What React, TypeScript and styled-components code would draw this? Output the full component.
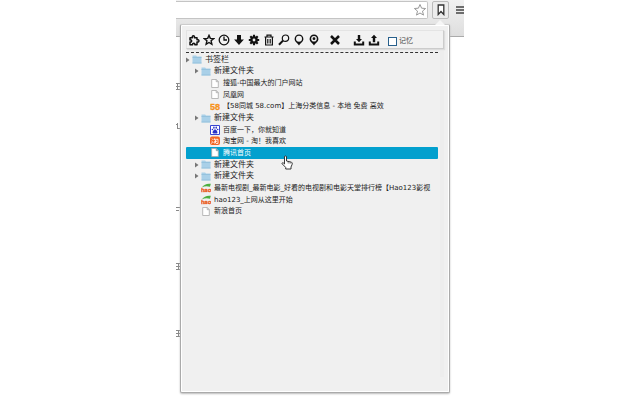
import React from "react";
import styled, { createGlobalStyle } from "styled-components";

const GlobalStyle = createGlobalStyle`
  * { box-sizing: border-box; }
  body {
    margin: 0;
    background: #fff;
    color: #222;
    font: 7px/10px "DejaVu Sans", "Noto Sans CJK SC", sans-serif;
  }
  button, a { color: inherit; font: inherit; }
`;

const Page = styled.main`
  position: relative;
  width: 45%;
  min-height: 100vh;
  margin: 0 auto;
`;

const BrowserBar = styled.header`
  display: flex;
  align-items: flex-start;
  gap: 4px;
  height: 37px;
  overflow: hidden;
  background: linear-gradient(#f1f1f1, #dedede);
  border-bottom: 1px solid #aaa;
`;

const AddressBar = styled.div`
  display: flex;
  flex: 1;
  align-items: center;
  height: 18px;
  margin-top: 1px;
  background: #fff;
  border: 1px solid #c4c4c4;
  border-left: 0;
  border-radius: 0 2px 2px 0;
`;

const AddressInput = styled.input`
  flex: 1;
  min-width: 0;
  padding: 0;
  border: 0;
  background: transparent;
  outline: none;
`;

const PlainButton = styled.button`
  display: flex;
  align-items: center;
  justify-content: center;
  padding: 0;
  border: 0;
  background: none;
  cursor: pointer;
`;

const ExtensionButton = styled(PlainButton)`
  width: 17px;
  height: 18px;
  margin-top: 1px;
  border: 1px solid #bbb;
  border-radius: 2px;
  background: #ececec;
`;

const MenuButton = styled(PlainButton)`
  justify-content: flex-end;
  width: 11px;
  height: 20px;
`;

const EdgeMarks = styled.svg`
  display: block;
`;

const Popup = styled.section`
  position: absolute;
  inset: 24px 14px 7px 4px;
  padding: 5px 5px 15px;
  background: #f0f0f0;
  border: 1px solid #aaa;
  border-top-color: #ccc;
  border-radius: 2px;
  box-shadow: inset 0 0 0 1px #fff, 0 1px 2px #bbb;
  &::before {
    content: "";
    position: absolute;
    top: -5px;
    right: 4px;
    border: 5px solid transparent;
    border-top: 0;
    border-bottom-color: #f6f6f6;
  }
`;

const PopupBody = styled.div`
  height: 100%;
  padding-right: 6px;
  background: linear-gradient(#ededed, #ededed) right / 4px 100% no-repeat;
`;

const Toolbar = styled.div`
  display: flex;
  align-items: center;
  height: 19px;
  margin-right: -6px;
  padding-left: 1px;
  background: #f2f2f2;
  border: 1px solid #e4e4e4;
  border-right-color: #ccc;
  border-bottom-color: #ccc;
  box-shadow: 1px 1px 1px #ddd;
`;

const Tools = styled.div<{ $gap: number }>`
  display: flex;
  flex: none;
  gap: 3px;
  margin-right: ${(p) => p.$gap}px;
`;

const Tool = styled(PlainButton)`
  width: 12px;
  height: 16px;
  color: #111;
`;

const Remember = styled.label`
  display: flex;
  align-items: center;
  gap: 2px;
  padding-top: 3px;
  color: #444;
  white-space: nowrap;
`;

const Check = styled.input`
  appearance: none;
  width: 9px;
  height: 9px;
  margin: 0;
  background: #fff;
  border: 1px solid #28608c;
  &:checked { background: #28608c; }
`;

const Tree = styled.ul`
  display: grid;
  grid-template-rows: repeat(14, 1fr);
  height: 163px;
  margin: 1px 0 0;
  padding: 0;
  list-style: none;
`;

const Divider = styled.hr`
  height: 0;
  margin: 3px 0 0;
  border: 0;
  border-top: 1px dashed #333;
`;

const Row = styled.li<{ $depth: number; $active?: boolean }>`
  display: flex;
  align-items: center;
  min-width: 0;
  padding-left: ${(p) => p.$depth * 9}px;
  overflow: hidden;
  border-radius: 1px;
  color: ${(p) => (p.$active ? "#fff" : "#222")};
  background: ${(p) => (p.$active ? "#02a0ce" : "transparent")};
`;

const Arrow = styled.span`
  display: flex;
  flex: none;
  width: 6px;
`;

const Entry = styled.a`
  display: flex;
  flex: 1;
  align-items: center;
  gap: 3px;
  min-width: 0;
  text-decoration: none;
  white-space: nowrap;
`;

const FolderEntry = styled(PlainButton)`
  gap: 3px;
  font-size: 8px;
  white-space: nowrap;
`;

const IconBox = styled.span`
  display: flex;
  flex: none;
  justify-content: center;
  width: 10px;
`;

const Pointer = styled.svg`
  position: absolute;
  top: 130px;
  left: 100px;
  pointer-events: none;
`;

const icons: Record<string, React.ReactNode> = {
  扩展: <path d="M2 3.7h2.4C3.4 1.2 7.2 1.2 6.4 3.7H9v2.1c2.6-1 2.6 3 0 2.1v2.8H6.8c.5-2-2.6-2-2.1 0H2V8c2.2.6 2.2-2.6 0-2.1z" fill="none" stroke="currentColor" strokeWidth="1.5" strokeLinejoin="round" />,
  收藏: <path d="M6 1.4l1.3 3 3.4.2-2.6 2.2.8 3.5L6 8.5l-2.9 1.8.8-3.5L1.3 4.6l3.4-.2z" fill="none" stroke="currentColor" strokeWidth="1.4" />,
  历史: <g fill="none" stroke="currentColor" strokeWidth="1.3"><circle cx="6" cy="6" r="4.8" /><path d="M6 2.5V6h3" /></g>,
  下载: <path d="M4 1h4v4.4h2.9L6 11 1.1 5.4H4z" fill="currentColor" />,
  设置: <g><path d="M6 .8v10.4M.8 6h10.4M2.3 2.3l7.4 7.4M9.7 2.3L2.3 9.7" stroke="currentColor" strokeWidth="2.1" /><circle cx="6" cy="6" r="3.8" fill="currentColor" /><circle cx="6" cy="6" r="1.4" fill="#eee" /></g>,
  删除: <g fill="none" stroke="currentColor" strokeWidth="1.2"><path d="M1.5 3h9M4 3V1.2h4V3M2.6 3v8h6.8V3M4.8 5v4.5M7.2 5v4.5" /></g>,
  搜索: <g fill="none" stroke="currentColor"><circle cx="7.5" cy="4.2" r="3.2" strokeWidth="1.2" /><path d="M5 6.6L1 10.8" strokeWidth="2" /></g>,
  位置: <g><path d="M6 11.5C5 9 1.6 7.8 1.6 4.9a4.4 4.4 0 018.8 0C10.4 7.8 7 9 6 11.5z" fill="currentColor" /><circle cx="6" cy="4.7" r="3" fill="#f2f2f2" /></g>,
  定位: <g><path d="M6 11.5C5 9 1.6 7.8 1.6 4.9a4.4 4.4 0 018.8 0C10.4 7.8 7 9 6 11.5z" fill="currentColor" /><circle cx="6" cy="4.7" r="2.8" fill="#f2f2f2" /><circle cx="6" cy="4.7" r="1.4" fill="currentColor" /></g>,
  关闭: <path d="M2 2l8 8M10 2l-8 8" stroke="currentColor" strokeWidth="2.5" />,
  导入: <path d="M4.8 1h2.4v4H9L6 8.2 3 5h1.8zM.8 7.5h2v2h6.4v-2h2v4H.8z" fill="currentColor" />,
  导出: <path d="M6 .8L9 4H7.2v4.2H4.8V4H3zM.8 7.5h2v2h6.4v-2h2v4H.8z" fill="currentColor" />,
};

type Kind = "folder" | "page" | "58" | "baidu" | "taobao" | "hao";

const KindIcon = ({ kind }: { kind: Kind }) => {
  switch (kind) {
    case "folder":
      return <svg width="10" height="9" viewBox="0 0 10 9"><path d="M.5.5h3.7l.8 1h4.5v7h-9z" fill="#a9d0e8" /><path d="M.5 8h9M.5 2.5h9" stroke="#8dbbd8" strokeWidth=".7" /></svg>;
    case "page":
      return <svg width="8" height="9" viewBox="0 0 8 9"><path d="M.7.5h4.6l2 2v6H.7zM5.2.5v2.2h2.1" fill="#fff" stroke="#aaa" strokeWidth=".8" /></svg>;
    case "58":
      return <svg width="10" height="11" viewBox="0 0 10 11"><text x="5" y="9" textAnchor="middle" fill="#f7931e" stroke="#f7931e" strokeWidth=".3" fontSize="9" fontWeight="700" fontFamily="Liberation Sans, sans-serif">58</text></svg>;
    case "baidu":
      return <svg width="10" height="10" viewBox="0 0 10 10"><path d="M.5.5h9v9h-9z" fill="#fff" stroke="#3845d3" /><g fill="#2932c8"><ellipse cx="3.9" cy="2.7" rx=".8" ry="1.1" /><ellipse cx="6.2" cy="2.7" rx=".8" ry="1.1" /><circle cx="2.4" cy="4.5" r=".8" /><circle cx="7.7" cy="4.5" r=".8" /><path d="M5 4.2C4 4.5 2.2 6.6 2.5 7.7s4.7 1.2 5 0S6 4.3 5 4.2z" /></g></svg>;
    case "taobao":
      return <svg width="10" height="10" viewBox="0 0 10 10"><rect y=".5" width="10" height="8.5" rx="2" fill="#f26522" /><path d="M1.8 2.7l1 .8M1.5 5l1 .7-1 2M4.5 2.5L4 4M4 3.3h4v4.2H6M4 5.3h3M5.5 4v3H4V6" stroke="#fff" strokeWidth=".8" fill="none" /></svg>;
    case "hao":
      return <svg width="10" height="10" viewBox="0 0 10 10"><path d="M1 4.2Q4 0 9.8.8L9 3.8Q5 2.4 1 4.2z" fill="#4caf3f" /><text x="5" y="9" textAnchor="middle" fill="#ea5a1a" stroke="#ea5a1a" strokeWidth=".3" fontSize="6" fontWeight="700" fontStyle="italic" fontFamily="Liberation Sans, sans-serif">hao</text></svg>;
  }
};

const rows: { depth: number; kind: Kind; text: string; active?: boolean }[] = [
  { depth: 0, kind: "folder", text: "书签栏" },
  { depth: 1, kind: "folder", text: "新建文件夹" },
  { depth: 2, kind: "page", text: "搜狐-中国最大的门户网站" },
  { depth: 2, kind: "page", text: "凤凰网" },
  { depth: 2, kind: "58", text: "【58同城 58.com】上海分类信息 - 本地 免费 高效" },
  { depth: 1, kind: "folder", text: "新建文件夹" },
  { depth: 2, kind: "baidu", text: "百度一下，你就知道" },
  { depth: 2, kind: "taobao", text: "淘宝网 - 淘！我喜欢" },
  { depth: 2, kind: "page", text: "腾讯首页", active: true },
  { depth: 1, kind: "folder", text: "新建文件夹" },
  { depth: 1, kind: "folder", text: "新建文件夹" },
  { depth: 1, kind: "hao", text: "最新电视剧_最新电影_好看的电视剧和电影天堂排行榜【Hao123影视" },
  { depth: 1, kind: "hao", text: "hao123_上网从这里开始" },
  { depth: 1, kind: "page", text: "新浪首页" },
];

const ToolGroup = ({ names, gap }: { names: string[]; gap: number }) => (
  <Tools $gap={gap}>
    {names.map((name) => (
      <Tool key={name} type="button" aria-label={name}>
        <svg width="12" height="12" viewBox="0 0 12 12">{icons[name]}</svg>
      </Tool>
    ))}
  </Tools>
);

export default function App() {
  return (
    <>
      <GlobalStyle />
      <Page lang="zh-CN">
        <BrowserBar>
          <AddressBar>
            <AddressInput aria-label="地址" />
            <PlainButton type="button" aria-label="添加书签">
              <svg width="14" height="14" viewBox="0 0 14 14"><path d="M7 1.5l1.6 3.7 4 .3-3.1 2.6 1 4L7 10l-3.5 2.1 1-4-3.1-2.6 4-.3z" fill="#fff" stroke="#999" /></svg>
            </PlainButton>
          </AddressBar>
          <ExtensionButton type="button" aria-label="书签">
            <svg width="8" height="12" viewBox="0 0 8 12"><path d="M1.2 1h5.6v9.5L4 7.5l-2.8 3z" fill="#fff" stroke="#333" strokeWidth="1.3" /></svg>
          </ExtensionButton>
          <MenuButton type="button" aria-label="菜单">
            <svg width="8" height="10" viewBox="0 0 8 10"><path d="M0 2h8M0 5h8M0 8h8" stroke="#444" strokeWidth="1.6" /></svg>
          </MenuButton>
        </BrowserBar>
        <EdgeMarks width="4" height="310" viewBox="0 0 4 310" aria-hidden="true">
          <path d="M0 46.5h4M0 49.5h4M0 52.5h4M1.5 46v7M0 87.5h2M1.5 86v6M1 91.5h3M0 170.5h4M0 173.5h3M0 226.5h4M0 229.5h4M0 232.5h4M2.5 226v7M0 293.5h4M0 296.5h4M0 299.5h4M2.5 293v7" stroke="#888" fill="none" />
        </EdgeMarks>
        <Popup>
          <PopupBody>
            <Toolbar>
              <ToolGroup gap={9} names={["扩展", "收藏", "历史", "下载", "设置", "删除", "搜索", "位置", "定位"]} />
              <ToolGroup gap={12} names={["关闭"]} />
              <ToolGroup gap={8} names={["导入", "导出"]} />
              <Remember><Check type="checkbox" />记忆</Remember>
            </Toolbar>
            <Divider />
            <Tree>
              {rows.map((row, i) => (
                <Row key={i} $depth={row.depth} $active={row.active}>
                  <Arrow>
                    {row.kind === "folder" && <svg width="4" height="6" viewBox="0 0 4 6"><path d="M0 .5L3.5 3 0 5.5z" fill="#777" /></svg>}
                  </Arrow>
                  {row.kind === "folder" ? (
                    <FolderEntry type="button"><IconBox><KindIcon kind={row.kind} /></IconBox>{row.text}</FolderEntry>
                  ) : (
                    <Entry href="#"><IconBox><KindIcon kind={row.kind} /></IconBox>{row.text}</Entry>
                  )}
                </Row>
              ))}
            </Tree>
          </PopupBody>
          <Pointer width="12" height="15" viewBox="0 0 12 15"><path d="M3.5 1.5q1-1 2 0V6l5 1.2q1 .4.7 2L10 12v2H4.7v-1.6L1 8.7q0-1.4 1.4-.7l1.1 1z" fill="#fff" stroke="#222" strokeWidth=".9" /><path d="M7.2 6.5v2M9.1 7v1.8" stroke="#333" strokeWidth=".6" /></Pointer>
        </Popup>
      </Page>
    </>
  );
}
